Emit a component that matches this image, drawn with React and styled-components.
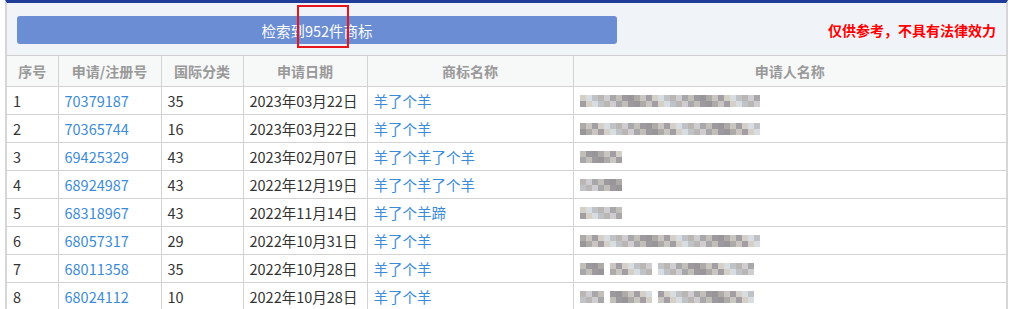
import React from 'react';
import styled, { createGlobalStyle } from 'styled-components';

const GlobalStyle = createGlobalStyle`
    body {
        margin: 0;
        background: #fff;
        font-family: "Noto Sans CJK SC", "Noto Sans", sans-serif;
    }
`;

const Page = styled.div`
    margin-left: 5px;
    width: 1003px;
    border-top: 3px solid #1f3c98;
    border-left: 2px solid #d6d6d6;
    border-right: 2px solid #d6d6d6;
    box-sizing: border-box;
`;

const Toolbar = styled.div`
    height: 53px;
    padding: 13px 10px 0 10px;
    box-sizing: border-box;
    display: flex;
    align-items: flex-start;
    justify-content: space-between;
    background: #f0f3f8;
    border-bottom: 1px solid #cfcfcf;
`;

const SearchResult = styled.div`
    position: relative;
    width: 600px;
    height: 28px;
    border-radius: 3px;
    background: #6a8dd3;
    color: #fff;
    font-size: 14.5px;
    display: flex;
    align-items: center;
    justify-content: center;
`;

const Highlight = styled.div`
    position: absolute;
    left: 280px;
    top: -11px;
    width: 48px;
    height: 39px;
    border: 2px solid #e8141c;
`;

const Notice = styled.div`
    margin-top: 4px;
    color: #f00;
    font-size: 14px;
    font-weight: bold;
`;

const Table = styled.table`
    width: 100%;
    border-collapse: collapse;
    table-layout: fixed;
`;

const HeadCell = styled.th`
    height: 30px;
    padding: 0;
    background: #f7f8f8;
    color: #999;
    font-size: 14px;
    font-weight: bold;
    text-align: center;
    border-right: 1px solid #d3d3d3;
    border-bottom: 1px solid #d3d3d3;
    &:last-child { border-right: none; }
`;

const Cell = styled.td`
    height: 27px;
    padding: 0 0 0 6px;
    font-size: 14.5px;
    color: ${(p) => (p.$link ? '#3b8bd9' : '#333')};
    border-right: 1px solid #d3d3d3;
    border-bottom: 1px solid #d3d3d3;
    white-space: nowrap;
    overflow: hidden;
    &:last-child { border-right: none; }
`;

const Mosaic = styled.div`
    display: flex;
    gap: 6px;
    height: 12px;
    filter: blur(0.4px);
`;

const Segment = styled.div`
    display: flex;
    flex-wrap: wrap;
    height: 12px;
    overflow: hidden;
`;

const Tile = styled.span`
    width: 6px;
    height: 6px;
`;

const columns = [
    { title: '序号', width: 51 },
    { title: '申请/注册号', width: 103 },
    { title: '国际分类', width: 82 },
    { title: '申请日期', width: 124 },
    { title: '商标名称', width: 206 },
    { title: '申请人名称' },
];

const rows = [
    { no: 1, reg: '70379187', cls: '35', date: '2023年03月22日', name: '羊了个羊', owner: [30] },
    { no: 2, reg: '70365744', cls: '16', date: '2023年03月22日', name: '羊了个羊', owner: [30] },
    { no: 3, reg: '69425329', cls: '43', date: '2023年02月07日', name: '羊了个羊了个羊', owner: [7] },
    { no: 4, reg: '68924987', cls: '43', date: '2022年12月19日', name: '羊了个羊了个羊', owner: [7] },
    { no: 5, reg: '68318967', cls: '43', date: '2022年11月14日', name: '羊了个羊蹄', owner: [7] },
    { no: 6, reg: '68057317', cls: '29', date: '2022年10月31日', name: '羊了个羊', owner: [30] },
    { no: 7, reg: '68011358', cls: '35', date: '2022年10月28日', name: '羊了个羊', owner: [4, 7, 16] },
    { no: 8, reg: '68024112', cls: '10', date: '2022年10月28日', name: '羊了个羊', owner: [4, 7, 16] },
];

const tones = ['#b9b6b4', '#c9c6c2', '#a8a7a9', '#d4d0c8', '#9c9a9e', '#bfc3c8', '#aeaaa8', '#cfcdd2', '#a39ea3', '#c2bfb8', '#d8dde2', '#999699'];

function OwnerMosaic({ segments, seed }) {
    return (
        <Mosaic>
            {segments.map((count, s) => {
                const tiles = [];
                for (let r = 0; r < 2; r++) {
                    for (let i = 0; i < count; i++) {
                        const k = (i * 7 + r * 5 + seed * 3 + s * 4) % tones.length;
                        tiles.push(<Tile key={`${r}-${i}`} style={{ background: tones[k] }} />);
                    }
                }
                return (
                    <Segment key={s} style={{ width: count * 6 }}>
                        {tiles}
                    </Segment>
                );
            })}
        </Mosaic>
    );
}

function App() {
    return (
        <>
            <GlobalStyle />
            <Page>
                <Toolbar>
                    <SearchResult>
                        检索到952件商标
                        <Highlight />
                    </SearchResult>
                    <Notice>仅供参考，不具有法律效力</Notice>
                </Toolbar>
                <Table>
                    <colgroup>
                        {columns.map((c) => (
                            <col key={c.title} style={c.width ? { width: c.width } : undefined} />
                        ))}
                    </colgroup>
                    <thead>
                        <tr>
                            {columns.map((c) => (
                                <HeadCell key={c.title}>{c.title}</HeadCell>
                            ))}
                        </tr>
                    </thead>
                    <tbody>
                        {rows.map((r) => (
                            <tr key={r.no}>
                                <Cell>{r.no}</Cell>
                                <Cell $link>{r.reg}</Cell>
                                <Cell>{r.cls}</Cell>
                                <Cell>{r.date}</Cell>
                                <Cell $link>{r.name}</Cell>
                                <Cell>
                                    <OwnerMosaic segments={r.owner} seed={r.no} />
                                </Cell>
                            </tr>
                        ))}
                    </tbody>
                </Table>
            </Page>
        </>
    );
}

export default App;
